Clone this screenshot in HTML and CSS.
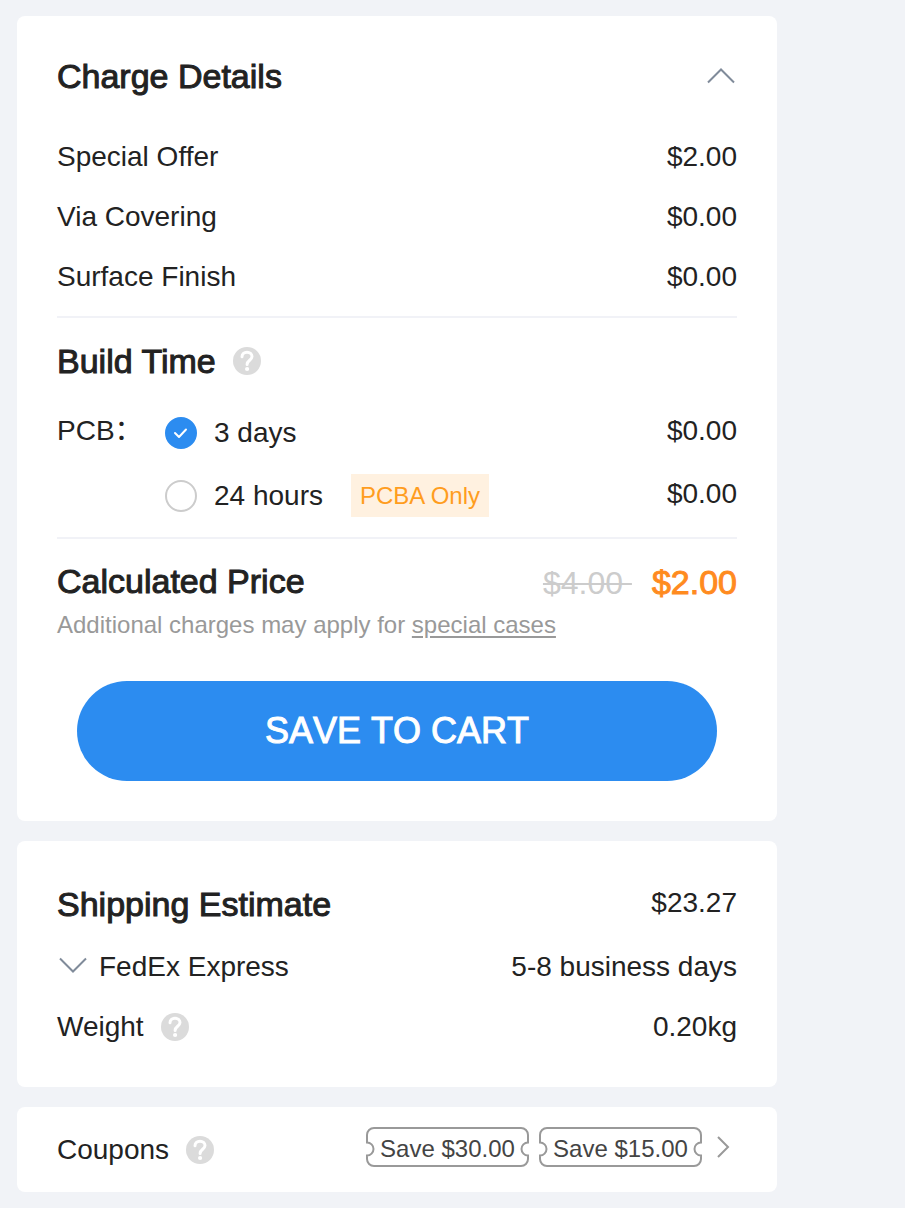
FILE: index.html
```html
<!DOCTYPE html>
<html lang="en">
<head>
<meta charset="utf-8">
<meta name="viewport" content="width=device-width, initial-scale=1">
<title>Charge Details</title>
<link rel="stylesheet" href="styles.css">
</head>
<body>
<svg width="0" height="0" class="defs" aria-hidden="true">
  <symbol id="help" viewBox="0 0 28 28">
    <circle cx="14" cy="14" r="14" fill="#dbdbdb"/>
    <path d="M9 9.8C9 7 11.2 5.3 14 5.3S19 7 19 9.6C19 13.2 14.1 13.4 14.1 17.4" fill="none" stroke="#fff" stroke-width="3" stroke-linecap="round"/>
    <circle cx="14.1" cy="22" r="2.1" fill="#fff"/>
  </symbol>
  <symbol id="ticket" viewBox="0 0 163 40">
    <path d="M8 1H155A7 7 0 0 1 162 8V15.5A6.5 6.5 0 0 0 162 28.5V32A7 7 0 0 1 155 39H8A7 7 0 0 1 1 32V28.5A6.5 6.5 0 0 0 1 15.5V8A7 7 0 0 1 8 1Z" fill="none" stroke="#999" stroke-width="2"/>
  </symbol>
</svg>
<main class="panel">
  <section class="card charges">
    <header class="row heading-row">
      <h2 class="title">Charge Details</h2>
      <button class="icon-button" type="button" aria-label="Collapse charge details"><svg class="chevron" viewBox="0 0 32 32"><path d="M3 22.5L16 9.5L29 22.5"/></svg></button>
    </header>
    <dl class="lines">
      <div class="row"><dt>Special Offer</dt><dd>$2.00</dd></div>
      <div class="row"><dt>Via Covering</dt><dd>$0.00</dd></div>
      <div class="row"><dt>Surface Finish</dt><dd>$0.00</dd></div>
    </dl>
    <div class="build">
      <h2 class="title with-help">Build Time <button class="help" type="button" aria-label="About build time"><svg><use href="#help"/></svg></button></h2>
      <div class="options" role="radiogroup" aria-labelledby="pcb">
        <span class="option-name" id="pcb">PCB：</span>
        <div class="option">
          <label class="choice"><span class="radio"><input type="radio" name="build" checked><svg viewBox="0 0 32 32" aria-hidden="true"><path d="M10 16L14 20L21 12.5"/></svg></span>3 days</label>
          <span class="option-price">$0.00</span>
        </div>
        <div class="option">
          <label class="choice"><span class="radio"><input type="radio" name="build"><svg viewBox="0 0 32 32" aria-hidden="true"><path d="M10 16L14 20L21 12.5"/></svg></span>24 hours</label>
          <span class="tag">PCBA Only</span>
          <span class="option-price">$0.00</span>
        </div>
      </div>
    </div>
    <div class="total">
      <div class="row total-row">
        <h2 class="title">Calculated Price</h2>
        <div class="prices"><del class="old-price">$4.00&nbsp;</del><strong class="new-price">$2.00</strong></div>
      </div>
      <p class="note">Additional charges may apply for <a href="#">special cases</a></p>
      <button class="save" type="button">SAVE TO CART</button>
    </div>
  </section>

  <section class="card shipping">
    <div class="row shipping-head"><h2 class="title">Shipping Estimate</h2><span>$23.27</span></div>
    <div class="row"><button class="carrier" type="button"><svg class="chevron" viewBox="0 0 32 32"><path d="M3 7.5L16 20.5L29 7.5"/></svg>FedEx Express</button><span>5-8 business days</span></div>
    <div class="row"><span class="with-help">Weight <button class="help" type="button" aria-label="About weight"><svg><use href="#help"/></svg></button></span><span>0.20kg</span></div>
  </section>

  <section class="card coupons">
    <span class="with-help">Coupons <button class="help" type="button" aria-label="About coupons"><svg><use href="#help"/></svg></button></span>
    <div class="coupon-list">
      <button class="coupon" type="button"><svg aria-hidden="true"><use href="#ticket"/></svg>Save $30.00</button>
      <button class="coupon" type="button"><svg aria-hidden="true"><use href="#ticket"/></svg>Save $15.00</button>
      <button class="more" type="button" aria-label="More coupons"><svg viewBox="0 0 16 24"><path d="M3 2L13 12L3 22"/></svg></button>
    </div>
  </section>
</main>
</body>
</html>
```
FILE: styles.css
```css
* { box-sizing: border-box; }

body {
  margin: 0;
  background: #f1f3f7;
  color: #222;
  font: 28px/60px "Liberation Sans", Arial, "Noto Sans CJK SC", sans-serif;
}

h2, p, dl, dd { margin: 0; }

button {
  padding: 0;
  border: 0;
  background: none;
  color: inherit;
  font: inherit;
  cursor: pointer;
}

svg { display: block; }
.defs { position: absolute; }

.panel {
  display: flex;
  flex-direction: column;
  gap: 20px;
  max-width: 760px;
  margin: 16px 17px;
}

.card {
  padding: 0 40px;
  border-radius: 8px;
  background: #fff;
}

.charges { padding-top: 30px; padding-bottom: 40px; }

.row {
  display: flex;
  align-items: center;
  justify-content: space-between;
}

.title {
  font-size: 34px;
  font-weight: 400;
  -webkit-text-stroke: 1px currentColor;
}

.chevron {
  width: 32px;
  height: 32px;
  fill: none;
  stroke: #808b9a;
  stroke-width: 2;
}

.lines {
  padding: 21px 0 9px;
  border-bottom: 2px solid #f1f2f7;
}

.with-help {
  display: flex;
  align-items: center;
  gap: 17px;
}

.help, .help svg { display: block; width: 28px; height: 28px; }

.build {
  padding: 13px 0 10px;
  border-bottom: 2px solid #f1f2f7;
}

.options {
  display: grid;
  grid-template-columns: 108px 1fr;
  padding-top: 10px;
}

.option-name { padding-bottom: 3px; }

.option {
  display: flex;
  grid-column: 2;
  align-items: center;
  min-height: 63px;
}

.choice {
  display: flex;
  align-items: center;
  gap: 17px;
}

.radio { display: grid; }
.radio > * { grid-area: 1 / 1; }

.radio input {
  width: 32px;
  height: 32px;
  margin: 0;
  border: 2px solid #ccc;
  border-radius: 50%;
  appearance: none;
}

.radio input:checked { border-color: #2c8cf0; background: #2c8cf0; }

.radio svg {
  z-index: 1;
  width: 32px;
  height: 32px;
  fill: none;
  stroke: #fff;
  stroke-width: 2;
  stroke-linecap: round;
  stroke-linejoin: round;
  pointer-events: none;
}

.tag {
  margin-left: 28px;
  padding: 0 9px;
  background: #fff1e0;
  color: #ff9d1e;
  font-size: 24px;
  line-height: 43px;
}

.option-price {
  margin-left: auto;
  padding-bottom: 4px;
  line-height: 58px;
}

.total { padding-top: 20px; }
.total-row { line-height: 40px; }

.prices { padding-top: 3px; font-size: 32px; }
.old-price { margin-right: 20px; color: #ccc; text-decoration-thickness: 2px; }

.new-price {
  color: #ff8b1f;
  font-size: 34px;
  font-weight: 400;
  -webkit-text-stroke: 1px currentColor;
}

.note {
  color: #999;
  font-size: 24px;
  line-height: 44px;
}

.note a { color: inherit; text-underline-offset: 3px; text-decoration-thickness: 2px; }

.save {
  display: block;
  width: calc(100% - 40px);
  margin: 34px 20px 0;
  border-radius: 50px;
  background: #2c8cf0;
  color: #fff;
  font-size: 36px;
  font-kerning: none;
  line-height: 100px;
  -webkit-text-stroke: 1px currentColor;
}

.shipping { padding-top: 30px; padding-bottom: 30px; }
.shipping-head { min-height: 66px; }
.shipping-head > span { padding-bottom: 3px; }

.carrier {
  display: flex;
  align-items: center;
  gap: 10px;
}

.coupons {
  display: flex;
  flex-wrap: wrap;
  align-items: center;
  justify-content: space-between;
  min-height: 85px;
}

.coupon-list {
  display: flex;
  align-items: center;
  gap: 10px;
  padding-bottom: 2px;
}

.coupon {
  position: relative;
  width: 163px;
  color: #444;
  font-size: 24px;
  line-height: 44px;
}

.coupon svg {
  position: absolute;
  top: 0;
  left: 0;
  width: 163px;
  height: 40px;
}

.more { padding: 0 6px 3px 3px; }

.more svg {
  width: 16px;
  height: 24px;
  fill: none;
  stroke: #999;
  stroke-width: 2;
}
```
